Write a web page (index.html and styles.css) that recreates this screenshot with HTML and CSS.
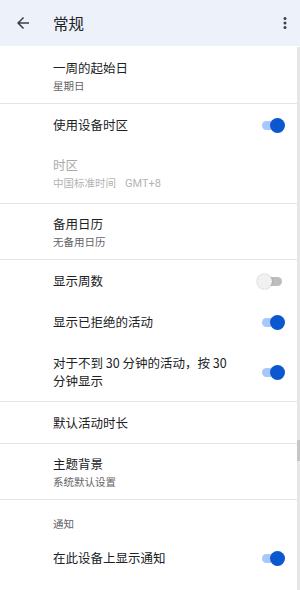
FILE: index.html
```html
<!DOCTYPE html>
<html lang="zh-CN">
<head>
<meta charset="utf-8">
<title>常规</title>
<link rel="stylesheet" href="styles.css">
</head>
<body>
<div class="app">
  <header class="topbar">
    <svg class="back" viewBox="0 0 24 24" width="18" height="18"><path d="M20 11H7.83l5.59-5.59L12 4l-8 8 8 8 1.41-1.41L7.83 13H20v-2z"/></svg>
    <div class="title">常规</div>
    <svg class="more" viewBox="0 0 24 24" width="18" height="18"><circle cx="12" cy="6" r="2"/><circle cx="12" cy="12" r="2"/><circle cx="12" cy="18" r="2"/></svg>
  </header>
  <div class="body">
    <div class="list">
      <div class="row two">
        <div class="text"><div class="label">一周的起始日</div><div class="sub">星期日</div></div>
      </div>
      <div class="divider"></div>
      <div class="row single">
        <div class="text"><div class="label">使用设备时区</div></div>
        <div class="switch on"><span class="track"></span><span class="thumb"></span></div>
      </div>
      <div class="row two disabled tz">
        <div class="text"><div class="label">时区</div><div class="sub">中国标准时间<span class="gmt">GMT+8</span></div></div>
      </div>
      <div class="divider"></div>
      <div class="row two">
        <div class="text"><div class="label">备用日历</div><div class="sub">无备用日历</div></div>
      </div>
      <div class="divider"></div>
      <div class="row single">
        <div class="text"><div class="label">显示周数</div></div>
        <div class="switch off"><span class="track"></span><span class="thumb"></span></div>
      </div>
      <div class="row single">
        <div class="text"><div class="label">显示已拒绝的活动</div></div>
        <div class="switch on"><span class="track"></span><span class="thumb"></span></div>
      </div>
      <div class="row multi">
        <div class="text"><div class="label">对于不到 30 分钟的活动，按 30 分钟显示</div></div>
        <div class="switch on"><span class="track"></span><span class="thumb"></span></div>
      </div>
      <div class="divider"></div>
      <div class="row single">
        <div class="text"><div class="label">默认活动时长</div></div>
      </div>
      <div class="divider"></div>
      <div class="row two">
        <div class="text"><div class="label">主题背景</div><div class="sub">系统默认设置</div></div>
      </div>
      <div class="divider"></div>
      <div class="section">通知</div>
      <div class="row single">
        <div class="text"><div class="label">在此设备上显示通知</div></div>
        <div class="switch on"><span class="track"></span><span class="thumb"></span></div>
      </div>
    </div>
    <div class="scrolltrack"><div class="scrollthumb"></div></div>
  </div>
</div>
</body>
</html>
```
FILE: styles.css
```css
* { box-sizing: border-box; }
html, body {
  margin: 0;
  padding: 0;
  background: #ffffff;
}
body {
  font-family: "Noto Sans CJK SC", "Noto Sans", sans-serif;
  color: #202124;
  width: 300px;
  height: 590px;
  overflow: hidden;
}
.app {
  display: flex;
  flex-direction: column;
  height: 590px;
}
.topbar {
  height: 46px;
  flex: none;
  display: flex;
  align-items: center;
  background: #edf2fa;
  padding: 0 6px 0 14px;
}
.back { fill: #3c4043; flex: none; }
.title {
  margin-left: 21px;
  font-size: 15.5px;
  line-height: 20px;
  flex: 1;
  color: #202124;
}
.more { fill: #3c4043; flex: none; }
.body {
  flex: 1;
  display: flex;
  min-height: 0;
}
.list {
  flex: 1;
  padding-top: 2px;
  display: flex;
  flex-direction: column;
}
.row {
  display: flex;
  align-items: center;
  gap: 16px;
  padding: 0 12px 0 53px;
}
.row.single { padding-top: 12px; padding-bottom: 11px; }
.row.two { padding-top: 11px; padding-bottom: 9px; }
.row.tz { padding-bottom: 11px; }
.row.multi { padding-top: 12px; padding-bottom: 11px; }
.text { flex: 1; min-width: 0; }
.label {
  font-size: 12.5px;
  line-height: 18px;
  color: #202124;
}
.sub {
  font-size: 10.5px;
  line-height: 17px;
  color: #5f6368;
}
.gmt {
  margin-left: 9px;
  font-family: Roboto, "Noto Sans", sans-serif;
  font-size: 11px;
}
.disabled .label { color: #a9a9a9; }
.disabled .sub { color: #b3b3b3; }
.divider {
  height: 1px;
  background: #e4e4e4;
  flex: none;
}
.section {
  padding: 17px 12px 6px 53px;
  font-size: 10.5px;
  line-height: 14px;
  color: #5f6368;
}
.switch {
  position: relative;
  width: 28px;
  height: 15px;
  flex: none;
  display: flex;
  align-items: center;
  padding-left: 5px;
}
.track {
  width: 20px;
  height: 9px;
  border-radius: 5px;
  background: #a8c7fa;
}
.thumb {
  position: absolute;
  top: 0;
  width: 15px;
  height: 15px;
  border-radius: 50%;
}
.switch.on .thumb { right: 0; background: #0b57d0; }
.switch.off .track { background: #bdbdbd; }
.switch.off .thumb {
  left: 0;
  background: #f1f1f1;
  box-shadow: 0 0 1.5px rgba(0,0,0,0.35);
}
.scrolltrack {
  width: 3px;
  flex: none;
  background: #e6e6e6;
  margin-top: 1px;
}
.scrollthumb {
  margin-top: 393px;
  height: 21px;
  background: #c6c6c6;
}
```
